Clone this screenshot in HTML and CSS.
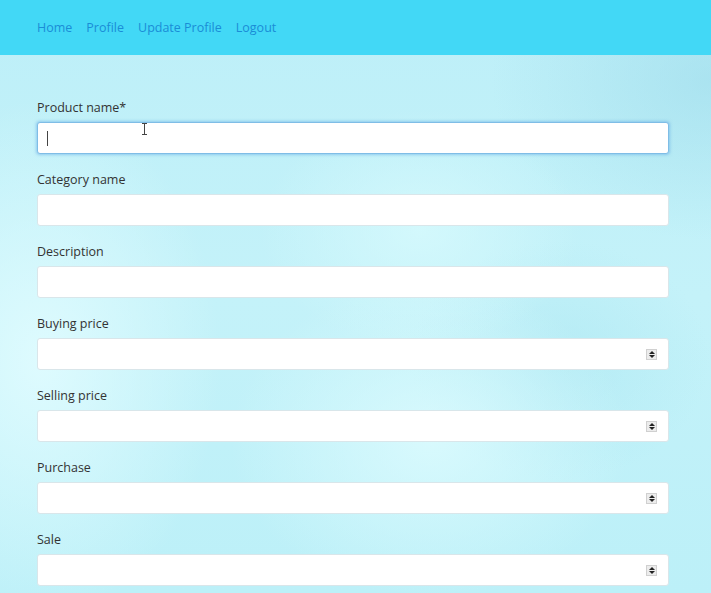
FILE: index.html
```html
<!DOCTYPE html>
<html>
<head>
<meta charset="utf-8">
<link rel="stylesheet" href="styles.css">
</head>
<body>
<nav class="navbar">
  <a href="#">Home</a>
  <a href="#">Profile</a>
  <a href="#">Update Profile</a>
  <a href="#">Logout</a>
</nav>
<main class="content">
  <form class="form">
    <div class="group">
      <label>Product name*</label>
      <div class="field focused">
        <span class="caret"></span>
        <svg class="ibeam" width="7" height="12" viewBox="0 0 7 12"><path d="M1 0.5h5M1 11.5h5M3.5 0.5v11" stroke="#444" stroke-width="1" fill="none"/></svg>
      </div>
    </div>
    <div class="group">
      <label>Category name</label>
      <div class="field"></div>
    </div>
    <div class="group">
      <label>Description</label>
      <div class="field"></div>
    </div>
    <div class="group">
      <label>Buying price</label>
      <div class="field"><span class="spin"><i class="up"></i><i class="down"></i></span></div>
    </div>
    <div class="group">
      <label>Selling price</label>
      <div class="field"><span class="spin"><i class="up"></i><i class="down"></i></span></div>
    </div>
    <div class="group">
      <label>Purchase</label>
      <div class="field"><span class="spin"><i class="up"></i><i class="down"></i></span></div>
    </div>
    <div class="group">
      <label>Sale</label>
      <div class="field"><span class="spin"><i class="up"></i><i class="down"></i></span></div>
    </div>
  </form>
</main>
</body>
</html>
```

FILE: styles.css
```css
html, body {
  margin: 0;
  height: 100%;
}
body {
  font-family: "Open Sans", "Noto Sans", sans-serif;
  font-size: 12.5px;
  color: #333;
  overflow: hidden;
  background:
    radial-gradient(ellipse 180px 260px at 40px 360px, rgba(225,252,255,0.9), rgba(225,252,255,0) 100%),
    radial-gradient(ellipse 160px 120px at 420px 230px, rgba(215,250,253,0.8), rgba(215,250,253,0) 100%),
    radial-gradient(ellipse 200px 160px at 430px 440px, rgba(220,251,254,0.85), rgba(220,251,254,0) 100%),
    radial-gradient(ellipse 150px 120px at 560px 360px, rgba(165,228,240,0.45), rgba(165,228,240,0) 100%),
    radial-gradient(ellipse 220px 160px at 711px 80px, rgba(150,215,232,0.5), rgba(150,215,232,0) 100%),
    linear-gradient(180deg, #bdeff8 0%, #c4f2f9 50%, #bcf0f8 100%);
}
.navbar {
  height: 55px;
  background: #42d8f6;
  display: flex;
  align-items: center;
  padding-left: 37px;
  padding-top: 1px;
  gap: 14px;
  box-sizing: border-box;
}
.navbar a {
  color: #1a8dd6;
  text-decoration: none;
  font-size: 12.5px;
  line-height: 16px;
}
.content {
  padding: 45px 0 0 37px;
}
.form {
  width: 632px;
  display: flex;
  flex-direction: column;
  gap: 18px;
}
.group {
  display: flex;
  flex-direction: column;
  gap: 6px;
}
.group label {
  line-height: 16px;
  color: #333;
}
.field {
  position: relative;
  height: 32px;
  box-sizing: border-box;
  background: #fff;
  border: 1px solid #d9e6ea;
  border-radius: 3px;
}
.field.focused {
  border-color: #7fbde6;
  box-shadow: 0 0 3px 1px rgba(100,170,230,0.55);
}
.caret {
  position: absolute;
  left: 9px;
  top: 8px;
  width: 1px;
  height: 15px;
  background: #444;
}
.ibeam {
  position: absolute;
  left: 103px;
  top: 0px;
}
.spin {
  position: absolute;
  right: 11px;
  top: 10px;
  width: 11px;
  height: 11px;
  background: #ececec;
  border: 1px solid #d0d0d0;
  box-sizing: border-box;
  display: flex;
  flex-direction: column;
  align-items: center;
  justify-content: center;
  gap: 1px;
}
.spin i {
  display: block;
  width: 0;
  height: 0;
  border-left: 3px solid transparent;
  border-right: 3px solid transparent;
}
.spin .up {
  border-bottom: 3px solid #222;
}
.spin .down {
  border-top: 3px solid #222;
}
```
